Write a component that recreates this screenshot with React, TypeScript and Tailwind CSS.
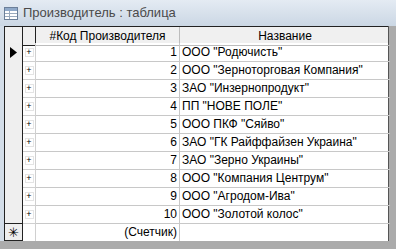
const rows = [
  { id: 1, name: 'ООО "Родючисть"' },
  { id: 2, name: 'ООО "Зерноторговая Компания"' },
  { id: 3, name: 'ЗАО "Инзернопродукт"' },
  { id: 4, name: 'ПП "НОВЕ ПОЛЕ"' },
  { id: 5, name: 'ООО ПКФ "Сяйво"' },
  { id: 6, name: 'ЗАО "ГК Райффайзен Украина"' },
  { id: 7, name: 'ЗАО "Зерно Украины"' },
  { id: 8, name: 'ООО "Компания Центрум"' },
  { id: 9, name: 'ООО "Агродом-Ива"' },
  { id: 10, name: 'ООО "Золотой колос"' },
];

function TableIcon() {
  return (
    <svg width="14" height="13" viewBox="0 0 14 13" className="shrink-0">
      <rect x="0.5" y="0.5" width="13" height="12" fill="#fff" stroke="#6b7f99" />
      <rect x="1" y="1" width="12" height="3" fill="#8fa9c9" />
      <line x1="1" y1="6.5" x2="13" y2="6.5" stroke="#9aaabd" />
      <line x1="1" y1="9.5" x2="13" y2="9.5" stroke="#9aaabd" />
      <line x1="5.5" y1="4" x2="5.5" y2="12" stroke="#9aaabd" />
    </svg>
  );
}

export default function App() {
  const cols = "grid grid-cols-[18px_13px_144px_210px]";
  return (
    <div
      className="w-[396px] h-[249px] overflow-hidden bg-[#ababab] text-[12px] text-black"
      style={{ fontFamily: '"Liberation Sans", Arial, sans-serif' }}
    >
      {/* Title bar */}
      <div className="h-[26px] flex items-center gap-[5px] pl-[4px] bg-gradient-to-b from-[#e4ebf3] to-[#cbd7e4]">
        <TableIcon />
        <span className="text-[13px] text-[#4a4a4a]">Производитель : таблица</span>
      </div>

      <div className="flex">
        <div className="w-[4px] bg-[#d3dde8]" />
        <div className="w-[385px] h-[215px] bg-white border-r border-[#555]">
          {/* Header */}
          <div className={`${cols} h-[17px] bg-[#f0f0f0] border-t border-l border-[#222]`}>
            <div className="border-r border-b border-[#222]" />
            <div className="border-r border-b border-[#222] bg-[#f0f0f0]" />
            <div className="border-r border-b border-[#bcbcbc] flex items-center justify-center">
              #Код Производителя
            </div>
            <div className="border-b border-[#bcbcbc] flex items-center justify-center">Название</div>
          </div>

          {rows.map((r) => (
            <div key={r.id} className={`${cols} h-[18px] border-l border-[#222]`}>
              <div className="bg-[#efefef] border-r border-b border-[#222] border-b-[#d8d8d8] flex items-center justify-center">
                {r.id === 1 && (
                  <svg width="7" height="11" viewBox="0 0 7 11">
                    <polygon points="0,0 7,5.5 0,11" fill="#000" />
                  </svg>
                )}
              </div>
              <div className="border-r border-b border-[#d0d0d0] flex items-center justify-center">
                <span className="text-[9px] leading-none border border-[#e4e4e4] w-[9px] h-[9px] flex items-center justify-center">
                  +
                </span>
              </div>
              <div className="border-r border-b border-[#c8c8c8] flex items-center justify-end pr-[2px]">{r.id}</div>
              <div className="border-b border-[#c8c8c8] flex items-center pl-[2px]">{r.name}</div>
            </div>
          ))}

          {/* New record row */}
          <div className={`${cols} h-[18px] border-l border-[#222]`}>
            <div className="bg-[#efefef] border border-l-0 border-[#222] flex items-center justify-center text-[13px] leading-none">
              ✳
            </div>
            <div className="border-r border-[#d0d0d0]" />
            <div className="border-r border-[#c8c8c8] flex items-center justify-end pr-[2px]">(Счетчик)</div>
            <div />
          </div>
        </div>
      </div>
    </div>
  );
}
